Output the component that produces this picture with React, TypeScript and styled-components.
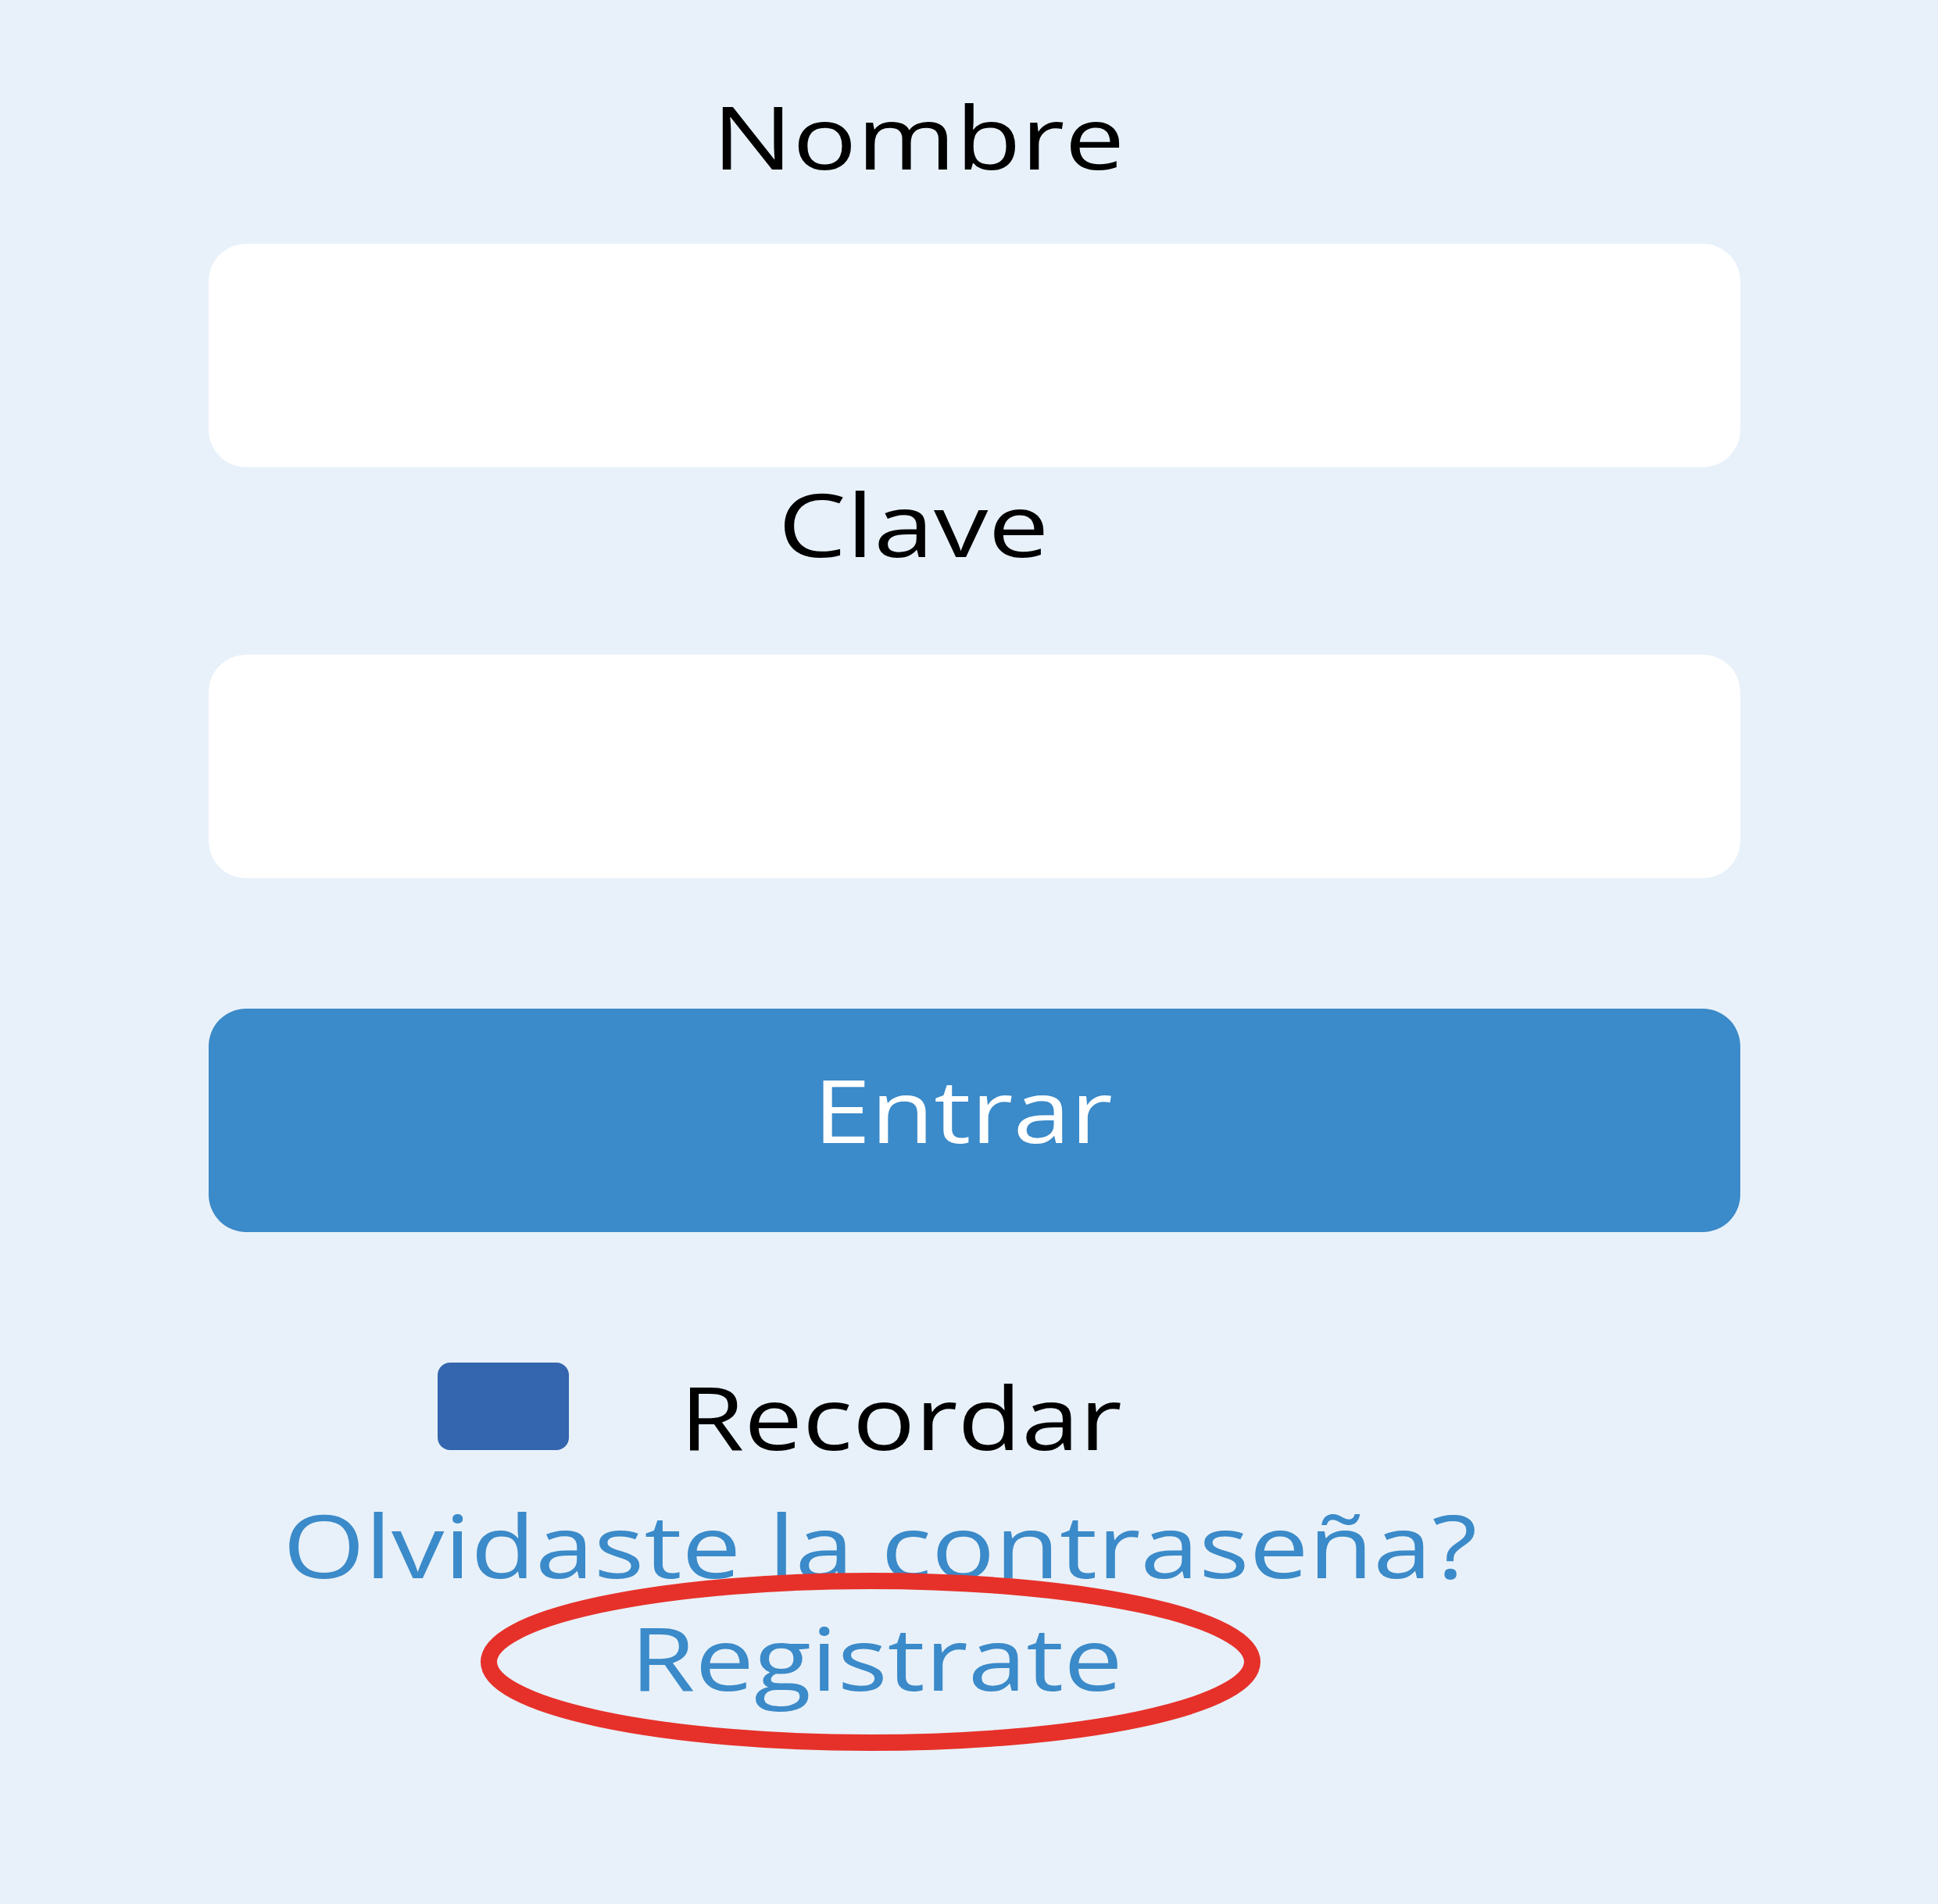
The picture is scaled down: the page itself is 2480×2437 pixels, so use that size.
import React from "react";
import styled, { createGlobalStyle } from "styled-components";

const Global = createGlobalStyle`
  html, body { margin: 0; padding: 0; background: #e8f1f9; }
  * { box-sizing: border-box; }
`;

const Page = styled.main`
  width: 2480px;
  min-height: 2437px;
  padding: 118px 253px 0 267px;
  background: #e8f1f9;
  font-family: "Open Sans", "Noto Sans", sans-serif;
`;

const Form = styled.form`
  display: flex;
  flex-direction: column;
  width: 1960px;
`;

const Stretch = styled.span<{ $origin?: string; $scale?: number }>`
  display: inline-block;
  transform: scaleX(${(p) => p.$scale || 1.19});
  transform-origin: ${(p) => p.$origin || "center"};
  white-space: nowrap;
`;

const Label = styled.label<{ $top?: number; $shift: number }>`
  display: block;
  margin-top: ${(p) => p.$top || 0}px;
  padding-right: ${(p) => p.$shift}px;
  height: 112px;
  font-size: 112px;
  line-height: 112px;
  text-align: center;
  color: #000;
`;

const Field = styled.input<{ $top: number }>`
  display: block;
  margin-top: ${(p) => p.$top}px;
  width: 100%;
  height: 286px;
  border: none;
  outline: none;
  border-radius: 48px;
  background: #ffffff;
  padding: 0 60px;
  font: inherit;
  font-size: 80px;
`;

const Submit = styled.button`
  display: flex;
  align-items: center;
  justify-content: center;
  margin-top: 167px;
  width: 100%;
  height: 286px;
  border: none;
  border-radius: 48px;
  background: #3b8ac9;
  color: #ffffff;
  font-family: inherit;
  font-size: 112px;
  line-height: 112px;
  padding: 0 30px 28px 0;
  cursor: pointer;
`;

const RememberRow = styled.div`
  display: flex;
  align-items: flex-start;
  margin-top: 167px;
  padding-left: 293px;
  gap: 142px;
`;

const Check = styled.input`
  appearance: none;
  -webkit-appearance: none;
  margin: 0;
  width: 168px;
  height: 112px;
  border-radius: 16px;
  background: #3466af;
  flex-shrink: 0;
`;

const CheckText = styled.span`
  margin-top: 13px;
  height: 112px;
  font-size: 112px;
  line-height: 112px;
  color: #000;
`;

const LinkRow = styled.div<{ $top: number; $shift: number }>`
  position: relative;
  margin-top: ${(p) => p.$top}px;
  padding-right: ${(p) => p.$shift}px;
  height: 112px;
  text-align: center;
  font-size: 112px;
  line-height: 112px;
`;

const Link = styled.a`
  color: #3b8ac9;
  text-decoration: none;
`;

const Highlight = styled.svg`
  position: absolute;
  left: 348px;
  top: -52px;
  width: 998px;
  height: 228px;
  pointer-events: none;
  overflow: visible;
`;

export default function App() {
  return (
    <>
      <Global />
      <Page>
        <Form onSubmit={(e) => e.preventDefault()}>
          <Label htmlFor="nombre" $shift={144}>
            <Stretch $scale={1.22}>Nombre</Stretch>
          </Label>
          <Field id="nombre" type="text" $top={82} />
          <Label htmlFor="clave" $top={16} $shift={156}>
            <Stretch $scale={1.24}>Clave</Stretch>
          </Label>
          <Field id="clave" type="password" $top={112} />
          <Submit type="submit">
            <Stretch $scale={1.18}>Entrar</Stretch>
          </Submit>
          <RememberRow>
            <Check type="checkbox" aria-label="Recordar" />
            <CheckText>
              <Stretch $origin="left">Recordar</Stretch>
            </CheckText>
          </RememberRow>
          <LinkRow $top={52} $shift={242}>
            <Link href="#">
              <Stretch $scale={1.205}>Olvidaste la contraseña?</Stretch>
            </Link>
          </LinkRow>
          <LinkRow $top={32} $shift={250}>
            <Link href="#">
              <Stretch $scale={1.2}>Registrate</Stretch>
            </Link>
            <Highlight viewBox="0 0 998 228">
              <ellipse cx="499" cy="114" rx="488.5" ry="103.5" fill="none" stroke="#e6312a" strokeWidth="21" />
            </Highlight>
          </LinkRow>
        </Form>
      </Page>
    </>
  );
}
